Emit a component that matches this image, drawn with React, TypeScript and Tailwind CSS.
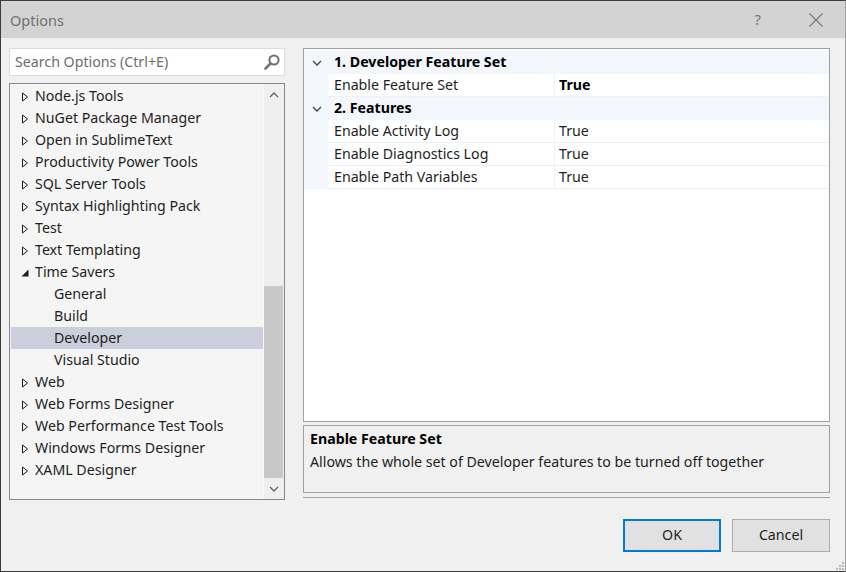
import React from 'react';

type Item = { label: string; level: number; state?: 'closed' | 'open'; selected?: boolean };

const items: Item[] = [
  { label: 'Node.js Tools', level: 0, state: 'closed' },
  { label: 'NuGet Package Manager', level: 0, state: 'closed' },
  { label: 'Open in SublimeText', level: 0, state: 'closed' },
  { label: 'Productivity Power Tools', level: 0, state: 'closed' },
  { label: 'SQL Server Tools', level: 0, state: 'closed' },
  { label: 'Syntax Highlighting Pack', level: 0, state: 'closed' },
  { label: 'Test', level: 0, state: 'closed' },
  { label: 'Text Templating', level: 0, state: 'closed' },
  { label: 'Time Savers', level: 0, state: 'open' },
  { label: 'General', level: 1 },
  { label: 'Build', level: 1 },
  { label: 'Developer', level: 1, selected: true },
  { label: 'Visual Studio', level: 1 },
  { label: 'Web', level: 0, state: 'closed' },
  { label: 'Web Forms Designer', level: 0, state: 'closed' },
  { label: 'Web Performance Test Tools', level: 0, state: 'closed' },
  { label: 'Windows Forms Designer', level: 0, state: 'closed' },
  { label: 'XAML Designer', level: 0, state: 'closed' },
];

function Arrow({ state }: { state?: 'closed' | 'open' }) {
  if (state === 'closed') {
    return (
      <svg width="8" height="10" viewBox="0 0 8 10" className="block">
        <path d="M1.5 1 L6.5 5 L1.5 9 Z" fill="none" stroke="#1e1e1e" strokeWidth="1" />
      </svg>
    );
  }
  if (state === 'open') {
    return (
      <svg width="8" height="10" viewBox="0 0 8 10" className="block">
        <path d="M7.5 1.5 L7.5 8.5 L0.5 8.5 Z" fill="#1e1e1e" />
      </svg>
    );
  }
  return null;
}

function Chevron({ dir, color = '#555' }: { dir: 'up' | 'down'; color?: string }) {
  return (
    <svg width="10" height="6" viewBox="0 0 10 6" className="block">
      {dir === 'up' ? (
        <path d="M1 5 L5 1 L9 5" fill="none" stroke={color} strokeWidth="1.3" />
      ) : (
        <path d="M1 1 L5 5 L9 1" fill="none" stroke={color} strokeWidth="1.3" />
      )}
    </svg>
  );
}

function CatRow({ title }: { title: string }) {
  return (
    <div className="flex h-[23px] items-center bg-[#f3f6fb]">
      <div className="flex w-[24px] justify-center pl-[2px]">
        <Chevron dir="down" color="#444" />
      </div>
      <div className="pl-[6px] font-bold text-black">{title}</div>
    </div>
  );
}

function PropRow({ name, value, bold }: { name: string; value: string; bold?: boolean }) {
  return (
    <div className="flex h-[23px]">
      <div className="w-[24px] bg-[#f3f6fb]" />
      <div className="flex w-[227px] items-center border-b border-r border-[#eef2f8] bg-white pl-[6px] text-[#1e1e1e]">
        {name}
      </div>
      <div className={`flex flex-1 items-center border-b border-[#eef2f8] bg-white pl-[4px] ${bold ? 'font-bold text-black' : 'text-[#1e1e1e]'}`}>
        {value}
      </div>
    </div>
  );
}

export default function App() {
  return (
    <div className="flex h-[572px] w-[846px] flex-col border border-[#3c3c3c] border-r-[#a0a0a0] bg-[#f0f0f0] font-['Noto_Sans',sans-serif] text-[14.2px] leading-none">
      {/* Title bar */}
      <div className="flex h-[37px] items-center bg-[#d3d3d3]">
        <div className="pl-[9px] pt-[1px] text-[14.5px] text-[#707070]">Options</div>
        <div className="ml-auto mr-[48px] text-[15px] text-[#777]">?</div>
        <div className="mr-[22px]">
          <svg width="14" height="14" viewBox="0 0 14 14" className="block">
            <path d="M0.5 0.5 L13.5 13.5 M13.5 0.5 L0.5 13.5" stroke="#777" strokeWidth="1.1" />
          </svg>
        </div>
      </div>

      {/* Body */}
      <div className="flex pl-[8px] pt-[10px]">
        {/* Left column */}
        <div className="w-[276px]">
          <div className="flex h-[28px] items-center border border-[#dadbe6] bg-white pl-[5px] pr-[3px]">
            <span className="pt-[1px] text-[#6d6d6d]">Search Options (Ctrl+E)</span>
            <svg width="18" height="18" viewBox="0 0 18 18" className="ml-auto block">
              <circle cx="11" cy="7" r="4.6" fill="none" stroke="#707070" strokeWidth="2" />
              <path d="M7.6 10.4 L2.5 15.5" stroke="#707070" strokeWidth="2.6" strokeLinecap="round" />
            </svg>
          </div>
          <div className="mt-[7px] flex h-[417px] border border-[#828790] bg-[#f5f5f5]">
            <div className="flex-1 pl-[1px] pt-[1px]">
              {items.map((it) => (
                <div
                  key={it.label}
                  className={`flex h-[22px] items-center pt-[1px] text-[#1e1e1e] ${it.selected ? 'bg-[#cccedb]' : ''}`}
                >
                  {it.level === 0 ? (
                    <>
                      <div className="flex w-[24px] justify-end pr-[6px]">
                        <Arrow state={it.state} />
                      </div>
                      <span>{it.label}</span>
                    </>
                  ) : (
                    <span className="pl-[43px]">{it.label}</span>
                  )}
                </div>
              ))}
            </div>
            {/* Scrollbar */}
            <div className="flex w-[21px] flex-col border-l border-[#fafafa] bg-[#efefef]">
              <div className="flex h-[21px] items-center justify-center">
                <Chevron dir="up" color="#606060" />
              </div>
              <div className="flex flex-1 flex-col pt-[181px] pr-[1px]">
                <div className="flex-1 bg-[#c8c8c8]" />
              </div>
              <div className="flex h-[21px] items-center justify-center">
                <Chevron dir="down" color="#606060" />
              </div>
            </div>
          </div>
        </div>

        {/* Right column */}
        <div className="ml-[18px] w-[527px]">
          <div className="h-[374px] border border-[#a0a0a0] bg-white pt-[2px]">
            <CatRow title="1. Developer Feature Set" />
            <PropRow name="Enable Feature Set" value="True" bold />
            <CatRow title="2. Features" />
            <PropRow name="Enable Activity Log" value="True" />
            <PropRow name="Enable Diagnostics Log" value="True" />
            <PropRow name="Enable Path Variables" value="True" />
          </div>
          <div className="mt-[3px] h-[68px] border border-[#a0a0a0] bg-[#f0f0f0] px-[6px] pt-[1px] leading-[23px] text-[#1e1e1e]">
            <div className="font-bold text-black">Enable Feature Set</div>
            <div>Allows the whole set of Developer features to be turned off together</div>
          </div>
          <div className="mt-[4px] h-px bg-[#a0a0a0]" />
          <div className="mt-[21px] flex justify-end gap-[11px]">
            <button className="flex h-[33px] w-[98px] items-center justify-center border-2 border-[#0078d7] bg-[#e1e1e1] text-[#1e1e1e]">
              OK
            </button>
            <button className="flex h-[33px] w-[98px] items-center justify-center border border-[#adadad] bg-[#e1e1e1] text-[#1e1e1e]">
              Cancel
            </button>
          </div>
        </div>
      </div>
      {/* resize grip */}
      <div className="relative flex-1">
        <svg width="8" height="8" viewBox="0 0 8 8" className="absolute bottom-[1px] right-[1px] block">
          <rect x="6" y="0" width="2" height="2" fill="#b8b8b8" />
          <rect x="3" y="3" width="2" height="2" fill="#b8b8b8" />
          <rect x="6" y="3" width="2" height="2" fill="#b8b8b8" />
          <rect x="0" y="6" width="2" height="2" fill="#b8b8b8" />
          <rect x="3" y="6" width="2" height="2" fill="#b8b8b8" />
          <rect x="6" y="6" width="2" height="2" fill="#b8b8b8" />
        </svg>
      </div>
    </div>
  );
}
